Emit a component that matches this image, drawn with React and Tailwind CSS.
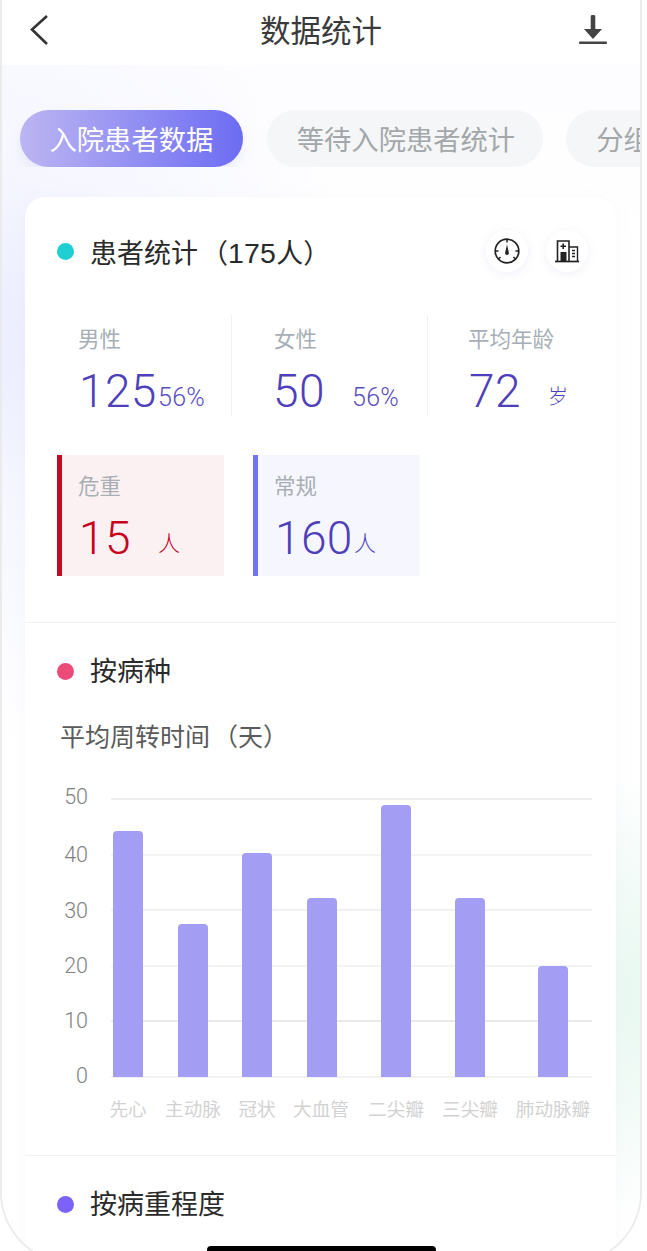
const cjk = "font-['Noto_Sans_CJK_SC','Noto_Sans',sans-serif]";

function SectionTitle({ dot, children, right, textCls = "-translate-y-[1px]" }) {
  return (
    <div className="flex items-center justify-between pl-8 pr-[28px]">
      <div className="flex items-center gap-[16px] h-[36px]">
        <span className={`w-[17px] h-[17px] rounded-full ${dot}`} />
        <span className={`text-[27px] leading-[36px] text-[#2a2a2a] ${textCls}`}>{children}</span>
      </div>
      {right}
    </div>
  );
}

function Num({ value, unit, color, unitCls = "text-[22px] -translate-y-[3px] font-['Noto_Sans_CJK_SC',sans-serif]" }) {
  return (
    <div className={`flex items-baseline font-['Roboto',sans-serif] font-light ${color}`}>
      <span className="w-[79px] text-[46px] leading-[52px] tracking-[0.4px]">{value}</span>
      <span className={`${unitCls} leading-[24px]`}>{unit}</span>
    </div>
  );
}

const pct = "text-[25px] tracking-[0.3px] -translate-y-[1.5px] text-[#5a4ec2]";

function Stat({ label, value, unit, className, numCls, unitCls }) {
  return (
    <div className={`h-[101px] ${className}`}>
      <div className="text-[21.5px] leading-[30px] pt-[8px] h-[38px] text-[#a6aeb6]">{label}</div>
      <div className={`mt-[12px] h-[51px] ${numCls}`}><Num value={value} unit={unit} color="text-[#4f3fbb]" unitCls={unitCls} /></div>
    </div>
  );
}

function Badge({ label, value, unit, cls, color }) {
  return (
    <div className={`w-[167px] h-[121px] border-l-[5px] pl-[16px] ${cls}`}>
      <div className="text-[21.5px] leading-[30px] pt-[15px] h-[45px] text-[#a9aeb4]">{label}</div>
      <div className="mt-[12px] pl-[1px]"><Num value={value} unit={unit} color={color} /></div>
    </div>
  );
}

function IconCircle({ children }) {
  return (
    <div className="w-[42px] h-[42px] rounded-full bg-white shadow-[0_2px_10px_rgba(110,110,210,0.10)] flex items-center justify-center">
      {children}
    </div>
  );
}

const bars = [
  [88, 831], [153, 924], [217, 853], [282, 898], [356, 805], [430, 898], [513, 966],
];
const grid = [[19, "#dcdcdf"], [75, "#e8e8ea"], [130, "#e2e2e4"], [186, "#e8e8ea"], [241, "#d6d6da"], [297, "#e6e6e8"]];
const ylabels = ["50", "40", "30", "20", "10", "0"];
const ylabelY = [24, 82, 138, 193, 248, 303];
const xlabels = [[103, "先心"], [168, "主动脉"], [232, "冠状"], [296, "大血管"], [371, "二尖瓣"], [445, "三尖瓣"], [528, "肺动脉瓣"]];

export default function App() {
  return (
    <div className={`w-[647px] h-[1251px] bg-white overflow-hidden ${cjk}`}>
      <div className="relative w-[642px] h-[1264px] border-x-2 border-b-2 border-[#ebebeb] rounded-b-[72px] overflow-hidden bg-white">
        <header className="h-[65px] bg-white flex items-center justify-between pl-[26px] pr-[32px] relative">
          <svg width="22" height="34" viewBox="0 0 22 34" fill="none" className="-mt-[6px]">
            <path d="M19 3 L4 16.5 L19 31" stroke="#333" strokeWidth="2.6" strokeLinecap="butt" />
          </svg>
          <h1 className="absolute left-[258px] top-[7px] text-[30.5px] leading-[44px] text-[#3a3a3a] font-normal">数据统计</h1>
          <svg width="30" height="30" viewBox="0 0 30 30" className="-mt-[6px]">
            <path d="M15 2 V16" stroke="#444" strokeWidth="4.6" strokeLinecap="round" />
            <path d="M6 14 H24 L15 24 Z" fill="#444" />
            <rect x="1" y="26.5" width="28" height="2.6" rx="1" fill="#444" />
          </svg>
        </header>

        <main className="h-[1199px] bg-[radial-gradient(circle_at_-40px_270px,#e9ecff_0,rgba(240,242,255,0.65)_170px,rgba(255,255,255,0)_400px),radial-gradient(circle_at_680px_930px,#e5f7ef_0,rgba(255,255,255,0)_230px),linear-gradient(#fdfdff,#ffffff_200px)]">
          <div className="flex pt-[45px] pl-[18px] overflow-hidden">
            <div className="shrink-0 h-[57px] px-[29.5px] rounded-full flex items-center text-[27.3px] text-white bg-[linear-gradient(90deg,#bcb5f2,#6c6cf3)] shadow-[0_6px_12px_rgba(120,120,230,0.12)]">入院患者数据</div>
            <div className="shrink-0 ml-[24px] h-[57px] pl-[30px] pr-[28px] rounded-full flex items-center text-[27.3px] text-[#a3a7aa] bg-[#f5f6f7]">等待入院患者统计</div>
            <div className="shrink-0 ml-[23px] h-[57px] px-[30px] rounded-full flex items-center text-[27.3px] text-[#a3a7aa] bg-[#f5f6f7] whitespace-nowrap">分组</div>
          </div>

          <section className="mt-[30px] ml-[23px] w-[591px] bg-white rounded-[20px] shadow-[0_4px_20px_rgba(130,130,200,0.05)]">
            <div className="pt-[33px]">
              <SectionTitle
                dot="bg-[#1fcfd2]"
                textCls="translate-y-[1px]"
                right={
                  <div className="flex gap-[18px]">
                    <IconCircle>
                      <svg width="28" height="28" viewBox="0 0 28 28" fill="none" stroke="#222">
                        <circle cx="14" cy="14" r="11.8" strokeWidth="1.7" />
                        <path d="M14 2.5V5.5M2.5 14H5.5M22.5 14H25.5M5.5 22L7.5 20M22.5 22L20.5 20" strokeWidth="1.5" />
                        <path d="M14 7.5 L15.8 15.5 A1.9 1.9 0 1 1 12.2 15.5 Z" fill="#222" stroke="none" />
                      </svg>
                    </IconCircle>
                    <IconCircle>
                      <svg width="26" height="24" viewBox="0 0 26 24" fill="none">
                        <path d="M3.5 22V2H15V22" stroke="#222" strokeWidth="1.6" />
                        <path d="M9.2 4.5V10M6.5 7.2H12" stroke="#222" strokeWidth="1.6" />
                        <rect x="6.5" y="13" width="6" height="9" fill="#222" />
                        <path d="M15 8H23.5V22" stroke="#222" strokeWidth="1.4" />
                        <path d="M18 11.5H21M18 14.5H21M18 17.5H21" stroke="#222" strokeWidth="1.6" />
                        <path d="M1 22.5H25" stroke="#222" strokeWidth="1.7" />
                      </svg>
                    </IconCircle>
                  </div>
                }
              >
                患者统计<span className="ml-[3px]">（</span><span className="font-['Liberation_Sans',sans-serif] text-[28.5px] tracking-[0.2px]">175</span>人）
              </SectionTitle>

              <div className="flex mt-[43px] ml-[32px]">
                <Stat label="男性" value="125" unit="56%" unitCls={pct} numCls="pl-[1px]" className="w-[175px] pl-[21px] border-r border-[#f0f0f3]" />
                <Stat label="女性" value="50" unit="56%" unitCls={pct} numCls="-ml-[1px]" className="w-[196px] pl-[42px] border-r border-[#f0f0f3]" />
                <Stat label="平均年龄" value="72" unit="岁" unitCls="text-[20px] -translate-y-[3px] font-['Noto_Sans_CJK_SC',sans-serif]" numCls="pl-[1px]" className="pl-[40px]" />
              </div>

              <div className="flex gap-[29px] mt-[39px] ml-[32px]">
                <Badge label="危重" value="15" unit="人" cls="border-[#c40a1e] bg-[#fbf1f2]" color="text-[#c8001e]" />
                <Badge label="常规" value="160" unit="人" cls="border-[#7272f5] bg-[#f6f7fe]" color="text-[#4f3fbb]" />
              </div>
            </div>

            <div className="mt-[46px] border-t border-[#f1f1f3] pt-[30px]">
              <SectionTitle dot="bg-[#ec4a78]">按病种</SectionTitle>
              <div className="mt-[29px] h-[35px] pl-[35px] text-[25px] leading-[34px] text-[#5a5a5a]">平均周转时间<span className="ml-[3px]">（</span>天）</div>
              <svg width="591" height="350" viewBox="0 0 591 350" className="block mt-[27px]">
                {grid.map(([y, c]) => (
                  <line key={y} x1="86" x2="567" y1={y} y2={y} stroke={c} strokeWidth="1.2" />
                ))}
                {bars.map(([x, top]) => (
                  <path
                    key={x}
                    d={`M${x} 297V${top - 780 + 4}Q${x} ${top - 780} ${x + 4} ${top - 780}H${x + 26}Q${x + 30} ${top - 780} ${x + 30} ${top - 780 + 4}V297Z`}
                    fill="#a49df4"
                  />
                ))}
                {ylabels.map((t, i) => (
                  <text key={t} x="63" y={ylabelY[i]} textAnchor="end" fontSize="21.5" fontWeight="300" fill="#7f7f7f" fontFamily="Roboto, sans-serif">{t}</text>
                ))}
                {xlabels.map(([x, t]) => (
                  <text key={t} x={x} y="336" textAnchor="middle" fontSize="18.6" fill="#d2d2d2" fontFamily="'Noto Sans CJK SC', sans-serif">{t}</text>
                ))}
              </svg>
            </div>

            <div className="mt-[25px] border-t border-[#f1f1f3] pt-[30px] pb-[40px]">
              <SectionTitle dot="bg-[#7c62f8]">按病重程度</SectionTitle>
            </div>
          </section>
        </main>

        <div className="absolute left-[205px] top-[1246px] w-[229px] h-[8px] bg-black rounded-t-[4px]" />
      </div>
    </div>
  );
}
